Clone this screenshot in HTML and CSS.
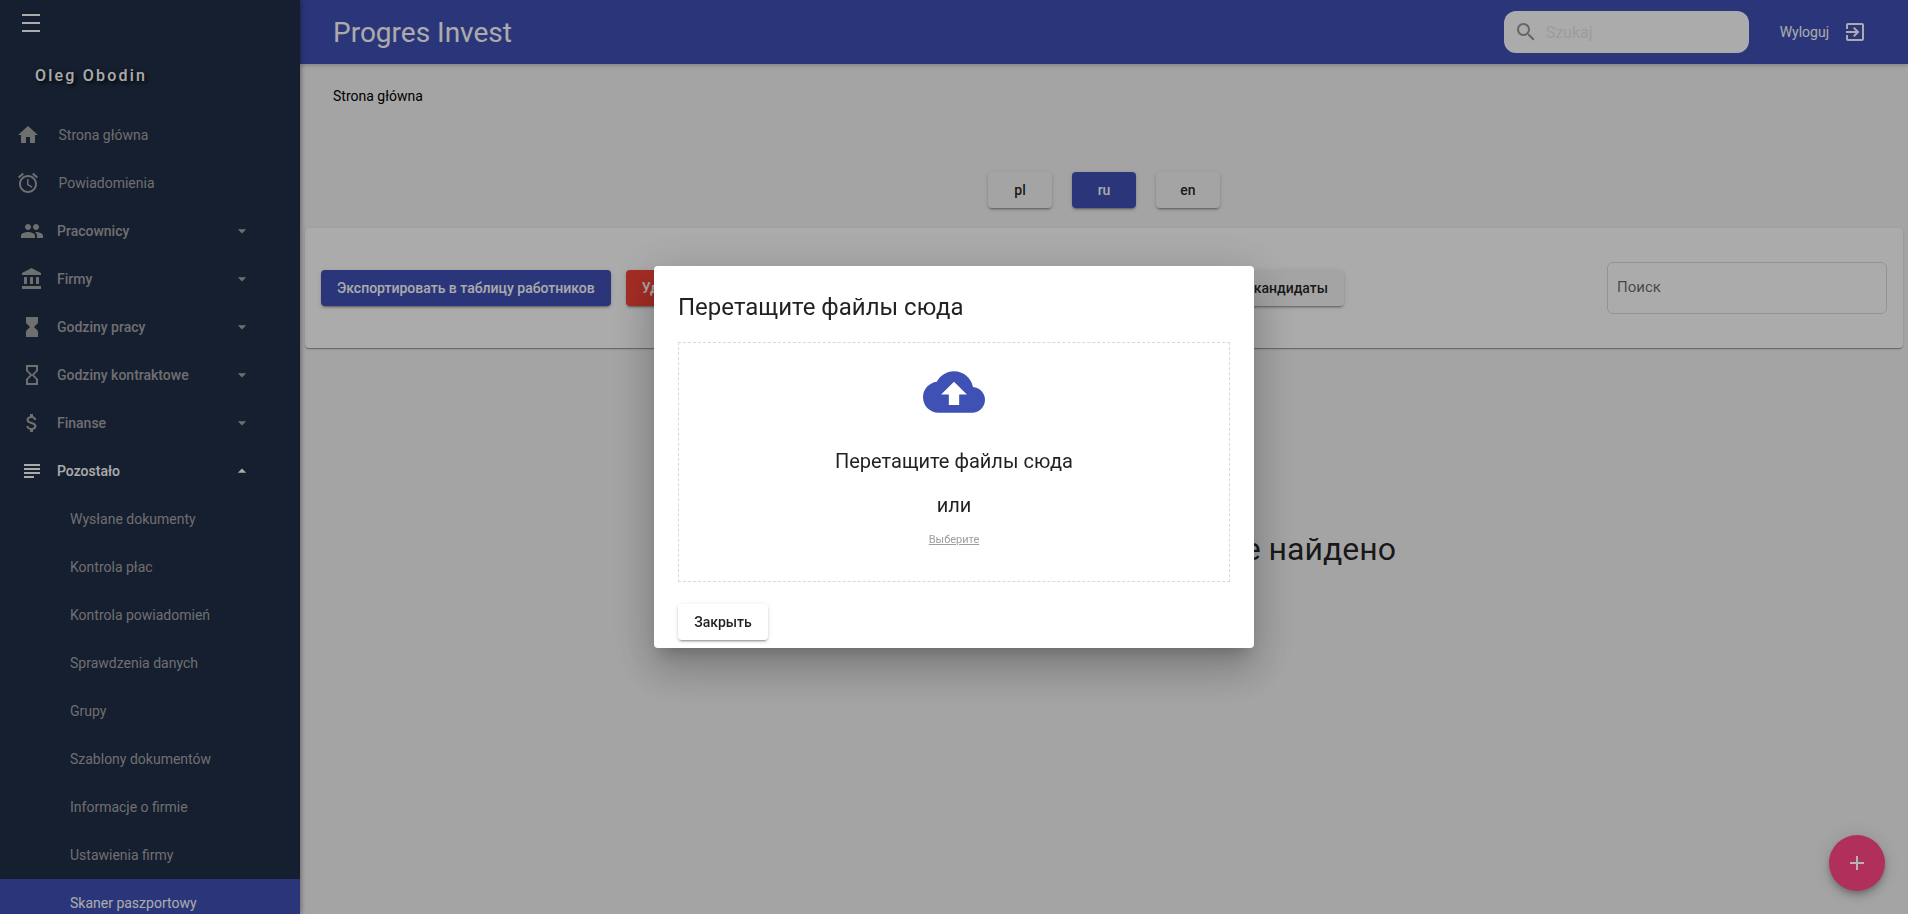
FILE: index.html
```html
<!DOCTYPE html>
<html lang="pl">
<head>
<meta charset="utf-8">
<title>Progres Invest</title>
<link rel="stylesheet" href="styles.css">
</head>
<body>
<div class="app">
  <aside class="sidebar">
    <div class="side-top">
      <svg class="burger" viewBox="0 0 18 18"><path d="M0 1h18M0 9h18M0 17h18"/></svg>
      <div class="user">Oleg Obodin</div>
    </div>
    <nav class="nav">
      <a class="item plain"><svg class="ico" viewBox="0 0 24 24"><path d="M10 20v-6h4v6h5v-8h3L12 3 2 12h3v8z"/></svg><span>Strona główna</span></a>
      <a class="item plain"><svg class="ico" viewBox="0 0 24 24"><path d="M22 5.72l-4.6-3.86-1.29 1.53 4.6 3.86L22 5.72zM7.88 3.39L6.6 1.86 2 5.71l1.29 1.53 4.59-3.85zM12.5 8H11v6l4.75 2.85.75-1.23-4-2.37V8zM12 4c-4.97 0-9 4.03-9 9s4.02 9 9 9c4.97 0 9-4.03 9-9s-4.03-9-9-9zm0 16c-3.87 0-7-3.13-7-7s3.13-7 7-7 7 3.13 7 7-3.13 7-7 7z"/></svg><span>Powiadomienia</span></a>
      <a class="item group"><svg class="ico" viewBox="0 0 24 24"><path d="M16 11c1.66 0 2.99-1.34 2.99-3S17.66 5 16 5c-1.66 0-3 1.34-3 3s1.34 3 3 3zm-8 0c1.66 0 2.99-1.34 2.99-3S9.66 5 8 5C6.34 5 5 6.34 5 8s1.34 3 3 3zm0 2c-2.33 0-7 1.17-7 3.5V19h14v-2.5c0-2.33-4.67-3.5-7-3.5zm8 0c-.29 0-.62.02-.97.05 1.16.84 1.97 1.97 1.97 3.45V19h6v-2.5c0-2.33-4.67-3.5-7-3.5z"/></svg><span>Pracownicy</span><svg class="caret" viewBox="0 0 24 24"><path d="M7 10l5 5 5-5z"/></svg></a>
      <a class="item group"><svg class="ico" viewBox="0 0 24 24"><path d="M4 10v7h3v-7H4zm6 0v7h3v-7h-3zM2 22h19v-3H2v3zm14-12v7h3v-7h-3zm-4.5-9L2 6v2h19V6l-9.5-5z"/></svg><span>Firmy</span><svg class="caret" viewBox="0 0 24 24"><path d="M7 10l5 5 5-5z"/></svg></a>
      <a class="item group"><svg class="ico" viewBox="0 0 24 24"><path d="M6 2v6h.01L6 8.01 10 12l-4 4 .01.01H6V22h12v-5.99h-.01L18 16l-4-4 4-3.99-.01-.01H18V2H6z"/></svg><span>Godziny pracy</span><svg class="caret" viewBox="0 0 24 24"><path d="M7 10l5 5 5-5z"/></svg></a>
      <a class="item group"><svg class="ico" viewBox="0 0 24 24"><path d="M6 2v6h.01L6 8.01 10 12l-4 4 .01.01H6V22h12v-5.99h-.01L18 16l-4-4 4-3.99-.01-.01H18V2H6zm10 14.5V20H8v-3.5l4-4 4 4zm-4-5l-4-4V4h8v3.5l-4 4z"/></svg><span>Godziny kontraktowe</span><svg class="caret" viewBox="0 0 24 24"><path d="M7 10l5 5 5-5z"/></svg></a>
      <a class="item group"><svg class="ico" viewBox="0 0 24 24"><path d="M11.8 10.9c-2.27-.59-3-1.2-3-2.15 0-1.09 1.01-1.85 2.7-1.85 1.78 0 2.44.85 2.5 2.1h2.21c-.07-1.72-1.12-3.3-3.21-3.81V3h-3v2.16c-1.94.42-3.5 1.68-3.5 3.61 0 2.31 1.91 3.46 4.7 4.13 2.5.6 3 1.48 3 2.41 0 .69-.49 1.79-2.7 1.79-2.06 0-2.87-.92-2.98-2.1h-2.2c.12 2.19 1.76 3.42 3.68 3.83V21h3v-2.15c1.95-.37 3.5-1.5 3.5-3.55 0-2.84-2.43-3.81-4.7-4.4z"/></svg><span>Finanse</span><svg class="caret" viewBox="0 0 24 24"><path d="M7 10l5 5 5-5z"/></svg></a>
      <a class="item group open"><svg class="ico" viewBox="0 0 24 24"><path d="M14 17H4v2h10v-2zm6-8H4v2h16V9zM4 15h16v-2H4v2zM4 5v2h16V5H4z"/></svg><span>Pozostało</span><svg class="caret" viewBox="0 0 24 24"><path d="M7 14l5-5 5 5z"/></svg></a>
      <a class="item sub">Wysłane dokumenty</a>
      <a class="item sub">Kontrola płac</a>
      <a class="item sub">Kontrola powiadomień</a>
      <a class="item sub">Sprawdzenia danych</a>
      <a class="item sub">Grupy</a>
      <a class="item sub">Szablony dokumentów</a>
      <a class="item sub">Informacje o firmie</a>
      <a class="item sub">Ustawienia firmy</a>
      <a class="item sub active">Skaner paszportowy</a>
    </nav>
  </aside>
  <div class="main">
    <header class="topbar">
      <h1 class="brand">Progres Invest</h1>
      <label class="search">
        <svg class="search-ico" viewBox="0 0 24 24"><path d="M15.5 14h-.79l-.28-.27C15.41 12.59 16 11.11 16 9.5 16 5.91 13.09 3 9.5 3S3 5.91 3 9.5 5.91 16 9.5 16c1.61 0 3.09-.59 4.23-1.57l.27.28v.79l5 4.99L20.49 19l-4.99-5zm-6 0C7.01 14 5 11.99 5 9.5S7.01 5 9.5 5 14 7.01 14 9.5 11.99 14 9.5 14z"/></svg>
        <input class="search-input" placeholder="Szukaj">
      </label>
      <a class="logout">Wyloguj<svg class="logout-ico" viewBox="0 0 24 24"><path d="M10.09 15.59L11.5 17l5-5-5-5-1.41 1.41L12.67 11H3v2h9.67l-2.58 2.59zM19 3H5c-1.11 0-2 .9-2 2v4h2V5h14v14H5v-4H3v4c0 1.1.89 2 2 2h14c1.1 0 2-.9 2-2V5c0-1.1-.9-2-2-2z"/></svg></a>
    </header>
    <div class="crumb">Strona główna</div>
    <div class="langs">
      <button class="btn lang">pl</button>
      <button class="btn lang primary">ru</button>
      <button class="btn lang">en</button>
    </div>
    <section class="card">
      <div class="actions">
        <button class="btn primary">Экспортировать в таблицу работников</button>
        <button class="btn danger">Удалить</button>
        <button class="btn push">Показать кандидаты</button>
      </div>
      <div class="field">Поиск</div>
    </section>
    <p class="empty">По вашему запросу ничего не найдено</p>
  </div>
</div>

<div class="backdrop">
  <div class="dialog">
    <h2 class="dialog-title">Перетащите файлы сюда</h2>
    <div class="drop">
      <svg class="cloud" viewBox="0 0 24 24"><path d="M19.35 10.04C18.67 6.59 15.64 4 12 4 9.11 4 6.6 5.64 5.35 8.04 2.34 8.36 0 10.91 0 14c0 3.31 2.69 6 6 6h13c2.76 0 5-2.24 5-5 0-2.64-2.05-4.78-4.65-4.96zM14 13v4h-4v-4H7l5-5 5 5h-3z"/></svg>
      <div class="drop-text first">Перетащите файлы сюда</div>
      <div class="drop-text or">или</div>
      <a class="pick">Выберите</a>
    </div>
    <div class="dialog-actions"><button class="btn close">Закрыть</button></div>
  </div>
</div>
<button class="fab"><svg class="fab-ico" viewBox="0 0 24 24"><path d="M19 13h-6v6h-2v-6H5v-2h6V5h2v6h6v2z"/></svg></button>
</body>
</html>
```
FILE: styles.css
```css
* { box-sizing: border-box; }
html, body { margin: 0; height: 100%; overflow: hidden; }
body { font-family: Roboto, "Liberation Sans", sans-serif; font-size: 14px; background: #f5f5f5; color: #000; }
a { display: block; }

.app { display: flex; height: 914px; overflow: hidden; }

.sidebar { width: 300px; flex: none; background: #212f46; color: #fff; overflow: hidden; height: 914px; box-shadow: 0 0 6px rgba(0,0,0,.5); position: relative; z-index: 2; }
.side-top { height: 111px; padding: 14px 0 0 22px; }
.burger { display: block; width: 18px; height: 18px; stroke: #fff; stroke-width: 2; fill: none; }
.user { margin: 34px 0 0 13px; font-size: 16px; font-weight: 500; letter-spacing: 2.2px; line-height: 20px; text-shadow: 2px 2px 4px #000; }

.item { display: flex; align-items: center; height: 48px; color: #a6a6a6; }
.ico { width: 24px; height: 24px; flex: none; fill: #a6a6a6; }
.plain { padding-left: 16px; }
.plain .ico { margin-right: 18.5px; }
.group { padding-left: 20px; font-weight: 500; }
.group .ico { margin-right: 13px; }
.caret { width: 20px; height: 20px; margin-left: auto; margin-right: 48px; fill: #a6a6a6; }
.open { color: #fff; }
.open .ico, .open .caret { fill: #fff; }
.sub { padding-left: 70px; }
.active { background: #3f51b5; color: #fff; }

.main { flex: 1; min-width: 0; display: flex; flex-direction: column; }
.topbar { height: 64px; flex: none; background: #3f51b5; color: #fff; display: flex; align-items: center; padding-left: 33px; box-shadow: 0 1px 4px rgba(0,0,0,.25); }
.brand { margin: 0; font-size: 28px; font-weight: 400; flex: 1; }
.search { width: 245px; height: 42px; background: #fff; border-radius: 12px; display: flex; align-items: center; padding-left: 10px; margin-right: 31px; }
.search-ico { width: 24px; height: 24px; fill: #999; flex: none; }
.search-input { border: 0; outline: 0; background: none; font: 16px Roboto, sans-serif; width: 190px; margin-left: 8px; padding: 0; }
.search-input::placeholder { color: #eaeaea; opacity: 1; }
.logout { display: flex; align-items: center; font-size: 14px; margin-right: 41px; }
.logout-ico { width: 24px; height: 24px; fill: #fff; margin-left: 14px; }

.crumb { padding: 22px 0 0 33px; line-height: 20px; }

.btn { height: 36px; border: 0; border-radius: 4px; padding: 0 16px; font: 500 14px Roboto, sans-serif; background: #f5f5f5; color: rgba(0,0,0,.87); box-shadow: 0 3px 1px -2px rgba(0,0,0,.2), 0 2px 2px rgba(0,0,0,.14), 0 1px 5px rgba(0,0,0,.12); white-space: nowrap; }
.primary { background: #3f51b5; color: #fff; }
.danger { background: #f44336; color: #fff; }

.langs { display: flex; justify-content: center; gap: 20px; margin-top: 66px; }
.lang { width: 64px; padding: 0; }

.card { display: flex; align-items: center; justify-content: space-between; height: 120px; margin: 20px 5px 0; padding: 0 16px; background: #fff; border-radius: 4px; box-shadow: 0 2px 1px -1px rgba(0,0,0,.2), 0 1px 1px rgba(0,0,0,.14), 0 1px 3px rgba(0,0,0,.12); }
.actions { display: flex; gap: 15px; width: 1023px; }
.push { margin-left: auto; }
.field { width: 280px; height: 52px; border: 1px solid rgba(0,0,0,.14); border-radius: 6px; padding: 14px 9px 0; font-size: 15px; line-height: 20px; color: rgba(0,0,0,.6); }

.empty { margin: 181px 0 0; text-align: center; font-size: 32px; line-height: 40px; color: rgba(0,0,0,.87); }

.backdrop { position: fixed; inset: 0; z-index: 10; background: rgba(0,0,0,.33); display: flex; align-items: center; justify-content: center; }
.dialog { width: 600px; height: 382px; background: #fff; border-radius: 4px; padding: 0 24px; box-shadow: 0 11px 15px -7px rgba(0,0,0,.2), 0 24px 38px 3px rgba(0,0,0,.14), 0 9px 46px 8px rgba(0,0,0,.12); color: rgba(0,0,0,.87); }
.dialog-title { margin: 0; font-size: 24px; font-weight: 400; line-height: 32px; padding-top: 25px; height: 76px; }
.drop { height: 240px; border: 1px dashed #d8d8d8; display: flex; flex-direction: column; align-items: center; padding-top: 18px; }
.cloud { width: 62px; height: 62px; fill: #3f51b5; flex: none; }
.drop-text { font-size: 20px; line-height: 28px; }
.first { margin-top: 24px; }
.or { margin-top: 16px; }
.pick { margin-top: 14px; font-size: 11px; line-height: 14px; color: #9e9e9e; text-decoration: underline; }
.dialog-actions { padding-top: 22px; }
.close { width: 90px; padding: 0; background: #fff; }

.fab { position: fixed; z-index: 11; right: 23px; bottom: 23px; width: 56px; height: 56px; border: 0; border-radius: 50%; padding: 0; background: #b02f5b; display: flex; align-items: center; justify-content: center; box-shadow: 0 3px 5px -1px rgba(0,0,0,.2), 0 6px 10px rgba(0,0,0,.14), 0 1px 18px rgba(0,0,0,.12); }
.fab-ico { width: 24px; height: 24px; fill: #b4b4b4; }
```
